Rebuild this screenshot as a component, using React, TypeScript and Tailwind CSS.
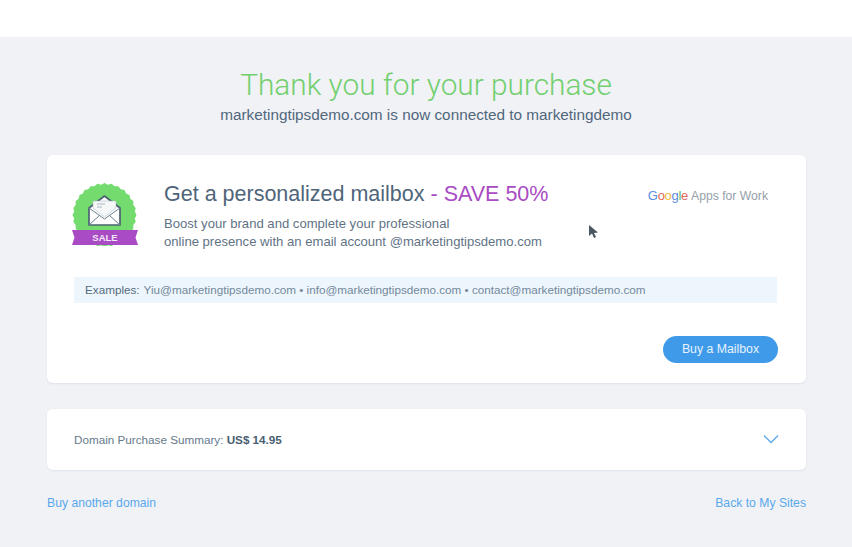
import React from 'react';

const SaleBadge: React.FC = () => {
  // scalloped green seal
  const points: string[] = [];
  const teeth = 28;
  for (let i = 0; i < teeth * 2; i++) {
    const r = i % 2 === 0 ? 32 : 30.5;
    const a = (Math.PI * i) / teeth;
    points.push(`${32.5 + r * Math.cos(a)},${35 + r * Math.sin(a)}`);
  }
  return (
    <svg width="68" height="66" viewBox="0 0 68 66" className="shrink-0">
      <polygon points={points.join(' ')} fill="#74dc6e" />
      <path d="M17 28 L32.5 16 L48 28 L48 45 L17 45 Z" fill="#fff" stroke="#4b6272" strokeWidth="1.7" strokeLinejoin="round" />
      <path d="M21 28 L21 21 L44 21 L44 28 L32.5 37 Z" fill="#f6f7f9" stroke="#a5b1bb" strokeWidth="0.5" />
      <path d="M25 24 H33 M25 27 H30" stroke="#a9b5bf" strokeWidth="1" />
      <path d="M17 28 L32.5 39 L48 28 M17 45 L28 35 M48 45 L37 35" fill="none" stroke="#6a7f8f" strokeWidth="1" />
      <path d="M0 50 H66 L63.5 57.5 L66 65 H0 L2.5 57.5 Z" fill="#a94bc4" />
    </svg>
  );
};

export default function App() {
  return (
    <div className="h-[547px] w-[852px] overflow-hidden bg-white font-['Liberation_Sans',Arial,sans-serif]">
      <div className="mt-[37px] flex h-[510px] flex-col bg-[#f0f2f6] px-[47px]">
        <h1 className="mt-[29px] text-center font-['Roboto',sans-serif] text-[29.8px] font-light leading-[38px] text-[#72cf6f]">
          Thank you for your purchase
        </h1>
        <p className="mt-[1px] text-center text-[15.3px] leading-[20px] text-[#50677c]">
          marketingtipsdemo.com is now connected to marketingdemo
        </p>

        <div className="relative mt-[30px] h-[228px] w-[759px] rounded-md bg-white px-[27px] pt-[25px] shadow-[0_1px_2px_rgba(80,100,120,0.12)]">
          <div className="flex h-[71px]">
            <div className="relative ml-[-2px]">
              <SaleBadge />
              <span className="absolute left-0 top-[52px] w-[66px] text-center text-[9.5px] font-bold leading-[12px] text-[#f3e6f7]">
                SALE
              </span>
            </div>
            <div className="ml-[24px]">
              <h2 className="text-[21.5px] leading-[28px] text-[#4f657a]">
                Get a personalized mailbox <span className="text-[#a94bc4]">- SAVE 50%</span>
              </h2>
              <p className="mt-[7px] text-[13.1px] leading-[18px] text-[#5f7385]">
                Boost your brand and complete your professional
                <br />
                online presence with an email account @marketingtipsdemo.com
              </p>
            </div>
            <div className="ml-auto mr-[11px] mt-[7px] flex h-[18px] items-baseline text-[12.2px] leading-[18px]">
              <span className="text-[13px] tracking-[-0.3px]">
                <span className="text-[#5a8fe0]">G</span>
                <span className="text-[#e0685b]">o</span>
                <span className="text-[#eebc3c]">o</span>
                <span className="text-[#5a8fe0]">g</span>
                <span className="text-[#5cb87a]">l</span>
                <span className="text-[#e0685b]">e</span>
              </span>
              <span className="ml-[3px] text-[#95a0ab]">Apps for Work</span>
            </div>
          </div>

          <div className="mt-[26px] flex h-[26px] w-[703px] items-center bg-[#edf6fd] pl-[11px] text-[11.7px] text-[#74889a]">
            <span className="text-[#566b7e]">Examples:</span>
            <span className="ml-[4px]">Yiu@marketingtipsdemo.com • info@marketingtipsdemo.com • contact@marketingtipsdemo.com</span>
          </div>

          <div className="mt-[33px] flex justify-end pr-px">
            <button className="h-[27px] w-[115px] rounded-full bg-[#3f9bea] text-[12.3px] text-[#e6f2fc]">Buy a Mailbox</button>
          </div>

          {/* mouse pointer from the recording */}
          <svg width="11" height="15" viewBox="0 0 11 15" className="absolute left-[541px] top-[69px]">
            <path d="M1 1 L1 12 L4 9.5 L6 14 L8 13 L6 9 L10 8.5 Z" fill="#4a5660" />
          </svg>
        </div>

        <div className="mt-[26px] flex h-[61px] w-[759px] items-center justify-between rounded-md bg-white pl-[27px] pr-[27px] shadow-[0_1px_2px_rgba(80,100,120,0.12)]">
          <p className="text-[11.7px] text-[#66798b]">
            Domain Purchase Summary: <span className="font-bold text-[#4a5f72]">US$ 14.95</span>
          </p>
          <svg width="16" height="10" viewBox="0 0 16 10" className="mb-[2px]">
            <path d="M1 1.5 L8 8.5 L15 1.5" fill="none" stroke="#5aa8ec" strokeWidth="1.3" />
          </svg>
        </div>

        <div className="mt-[25px] flex w-[759px] justify-between text-[12.2px] leading-[16px] text-[#5aa8ec]">
          <a>Buy another domain</a>
          <a>Back to My Sites</a>
        </div>
      </div>
    </div>
  );
}
